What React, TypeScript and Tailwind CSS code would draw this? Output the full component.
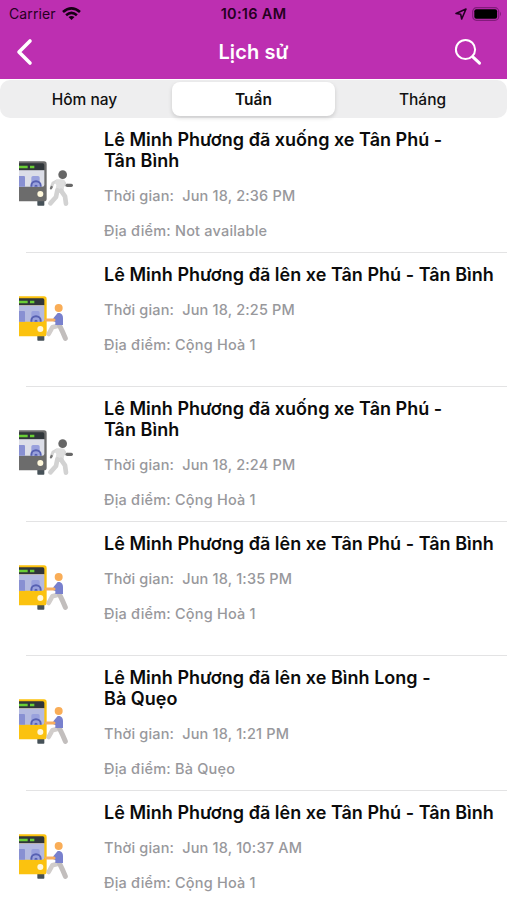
type Ride = { action: 'on' | 'off'; title: string[]; time: string; place: string };

const rides: Ride[] = [
  { action: 'off', title: ['Lê Minh Phương đã xuống xe Tân Phú -', 'Tân Bình'], time: 'Jun 18, 2:36 PM', place: 'Not available' },
  { action: 'on', title: ['Lê Minh Phương đã lên xe Tân Phú - Tân Bình'], time: 'Jun 18, 2:25 PM', place: 'Cộng Hoà 1' },
  { action: 'off', title: ['Lê Minh Phương đã xuống xe Tân Phú -', 'Tân Bình'], time: 'Jun 18, 2:24 PM', place: 'Cộng Hoà 1' },
  { action: 'on', title: ['Lê Minh Phương đã lên xe Tân Phú - Tân Bình'], time: 'Jun 18, 1:35 PM', place: 'Cộng Hoà 1' },
  { action: 'on', title: ['Lê Minh Phương đã lên xe Bình Long -', 'Bà Quẹo'], time: 'Jun 18, 1:21 PM', place: 'Bà Quẹo' },
  { action: 'on', title: ['Lê Minh Phương đã lên xe Tân Phú - Tân Bình'], time: 'Jun 18, 10:37 AM', place: 'Cộng Hoà 1' },
];

function Bus({ body, glass }: { body: string; glass: string }) {
  return (
    <>
      <rect x="82" y="145" width="21" height="22" rx="2" fill="#465158" />
      <path d="M27 34H102Q110 34 110 42V146Q110 154 102 154H27Z" fill={body} />
      <path d="M27 40H98Q103 40 103 45V61H27Z" fill="#30363a" />
      <path d="M27 51H53M60 51H73" stroke="#69ce35" strokeWidth="8" />
      <path d="M27 61H103V104Q103 110 97 110H27Z" fill={glass} />
      <path d="M27 78H42Q45 78 45 82V110H27Z" fill="#8890d2" />
      <path d="M64 83Q64 78 69 78H84Q89 78 89 83V110H64Z" fill="#99a1dd" />
      <path d="M64 110V107A14 13 0 0 1 92 107V110" fill="none" stroke="#5660b2" strokeWidth="6" />
      <path d="M73 110Q73 104 78 104Q83 104 83 110Z" fill="#5660b2" />
      <circle cx="91" cy="132" r="9" fill="#fff8dc" />
    </>
  );
}

function RideIcon({ action }: { action: Ride['action'] }) {
  return (
    <svg className="mt-[42px] ml-[18px] h-[50px] w-[60px] shrink-0" viewBox="24 30 180 150">
      {action === 'off' ? (
        <>
          <Bus body="#6c6c6c" glass="#dcdee8" />
          <path d="M140 93L129 99L125 109" fill="none" stroke="#d5d5d5" strokeWidth="9" strokeLinecap="round" />
          <path d="M160 94L167 106H174" fill="none" stroke="#d5d5d5" strokeWidth="9" />
          <path d="M172 106H184" stroke="#686868" strokeWidth="10" strokeLinecap="round" />
          <path d="M123 115L125 111" stroke="#777" strokeWidth="7" strokeLinecap="round" />
          <path d="M140 88H158Q166 90 164 98L160 128H135L139 105L134 98Z" fill="#dedede" />
          <path d="M142 121L138 141L121 160M153 122L165 139L168 161" fill="none" stroke="#d2d2d2" strokeWidth="14" strokeLinecap="round" strokeLinejoin="round" />
          <circle cx="158" cy="74" r="13" fill="#666" />
        </>
      ) : (
        <>
          <Bus body="#fbc20f" glass="#b4bae0" />
          <path d="M145 122L127 127L116 147" fill="none" stroke="#d1cdcb" strokeWidth="14" strokeLinecap="round" strokeLinejoin="round" />
          <path d="M148 120L157 139L166 160" fill="none" stroke="#c2bebd" strokeWidth="15" strokeLinecap="round" strokeLinejoin="round" />
          <path d="M143 84H149Q159 87 159 99V120H136V111L130 109V100Z" fill="#7880cd" />
          <path d="M109 105H132" stroke="#f7ad5f" strokeWidth="9" strokeLinecap="round" />
          <circle cx="146" cy="69" r="12" fill="#f9ad57" />
        </>
      )}
    </svg>
  );
}

function StatusBar() {
  return (
    <div className="grid h-[27px] grid-cols-3 items-center px-[9px] text-[14px] text-[#26001f]">
      <div className="flex items-center gap-[6px]">
        <span className="tracking-[0.1px]">Carrier</span>
        <svg className="h-[14px] w-[19px]" viewBox="0 0 19 14" fill="none" stroke="#160014" strokeWidth="2.7">
          <path d="M1 5Q9.5-2.2 18 5" />
          <path d="M4.1 8.2Q9.5 3.7 14.9 8.2" />
          <path d="M9.5 13L6.5 10Q9.5 7.8 12.5 10Z" fill="#160014" stroke="none" />
        </svg>
      </div>
      <div className="text-center text-[14.5px] font-semibold tracking-[0.3px] whitespace-nowrap">10:16 AM</div>
      <div className="flex items-center justify-end gap-[5px]">
        <svg className="h-[12px] w-[12px]" viewBox="0 0 12 12" fill="none" stroke="#210020" strokeWidth="1.6" strokeLinejoin="round">
          <path d="M1 5.5L11 1L6.7 11L5.7 6.3Z" />
        </svg>
        <svg className="-mr-[4px] h-[14px] w-[30px]" viewBox="0 0 30 14">
          <rect x="0.7" y="0.7" width="26" height="12.6" rx="3.8" fill="none" stroke="#831b7c" strokeWidth="1.2" />
          <rect x="2.3" y="2.3" width="22.8" height="9.4" rx="2" fill="#000" />
          <path d="M28 4.8Q30 7 28 9.2Z" fill="#831b7c" />
        </svg>
      </div>
    </div>
  );
}

export default function App() {
  return (
    <div className="flex h-[900px] w-[507px] flex-col overflow-hidden bg-white font-['Inter','Noto_Sans',sans-serif]">
      <header className="h-[79px] shrink-0 bg-[#bd2fb1]">
        <StatusBar />
        <div className="flex h-[50px] items-center justify-between pr-[25px] pl-[16px] text-white">
          <button className="w-[28px]" aria-label="Back">
            <svg className="h-[28px] w-[18px]" viewBox="0 0 18 28" fill="none" stroke="currentColor" strokeWidth="3.6" strokeLinecap="round" strokeLinejoin="round">
              <path d="M14 3L3 14L14 25" />
            </svg>
          </button>
          <h1 className="ml-[9px] text-[20px] font-semibold tracking-[0.1px]">Lịch sử</h1>
          <button aria-label="Search">
            <svg className="h-[28px] w-[28px]" viewBox="0 0 28 28" fill="none" stroke="currentColor" strokeLinecap="round">
              <circle cx="11.5" cy="11.5" r="9.6" strokeWidth="2" />
              <path d="M18.8 18.8L25.5 25.2" strokeWidth="3" />
            </svg>
          </button>
        </div>
      </header>

      <nav className="mt-px grid h-[38px] shrink-0 grid-cols-3 rounded-[10px] bg-[#eeeeef] text-[15.5px] font-medium text-[#111]">
        <button className="pt-px">Hôm nay</button>
        <button className="mx-[3px] my-[2px] rounded-[8px] bg-white pt-px font-semibold shadow-[0_2px_4px_rgba(0,0,0,0.15)]">Tuần</button>
        <button className="pt-px">Tháng</button>
      </nav>

      <main className="min-h-0 flex-1">
        {rides.map((ride) => (
          <article key={ride.time} className="flex h-[134.5px]">
            <RideIcon action={ride.action} />
            <div className="-ml-[52px] flex flex-1 border-b border-[#e3e3e4] pl-[78px]">
              <div className="pt-[11px] whitespace-nowrap">
                <h2 className="min-h-[22px] text-[18px] leading-[21px] font-semibold tracking-[0.02px] text-[#0b0b0b]">
                  {ride.title.map((line) => (
                    <span key={line} className="block">{line}</span>
                  ))}
                </h2>
                <p className="mt-[14.5px] text-[14.5px] leading-[20px] font-medium tracking-[0.17px] whitespace-pre text-[#98989c]">{'Thời gian:  '}{ride.time}</p>
                <p className="mt-[15px] text-[14.5px] leading-[20px] font-medium tracking-[0.2px] text-[#98989c]">Địa điểm: {ride.place}</p>
              </div>
            </div>
          </article>
        ))}
      </main>
    </div>
  );
}
